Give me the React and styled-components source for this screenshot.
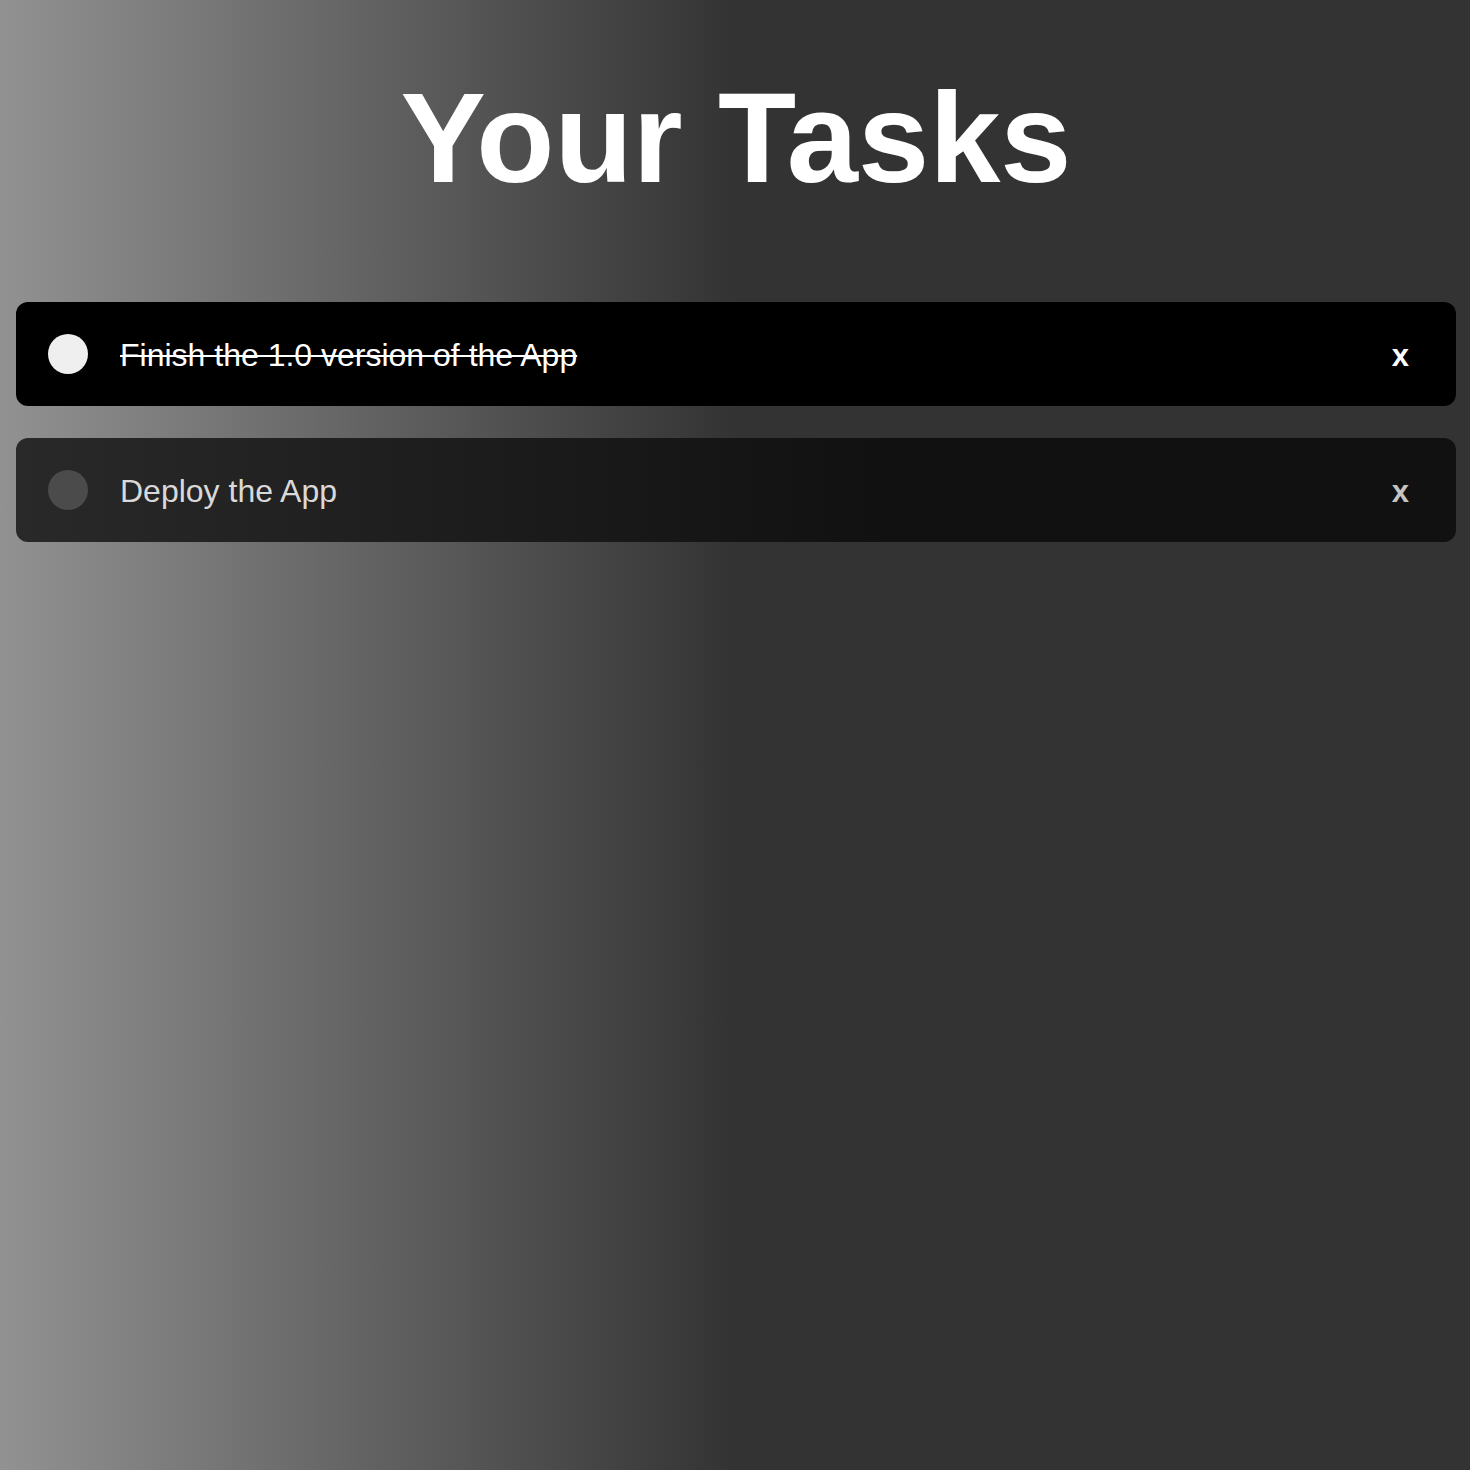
import React, { useState } from 'react'
import styled, { createGlobalStyle } from 'styled-components'

const GlobalStyle = createGlobalStyle`
  html, body {
    margin: 0;
    padding: 0;
  }
  body {
    min-height: 1470px;
    background: linear-gradient(to right, #929292 0%, #333333 50%, #333333 100%);
    font-family: "Liberation Sans", Arial, sans-serif;
    color: #fff;
  }
`

const Page = styled.div`
  padding: 66px 14px 0 16px;
`

const Title = styled.h1`
  margin: 0 0 93px;
  text-align: center;
  font-size: 128px;
  font-weight: 700;
  line-height: 143px;
  color: #fff;
`

const List = styled.ul`
  list-style: none;
  margin: 0;
  padding: 0;
  display: flex;
  flex-direction: column;
  gap: 32px;
`

const Row = styled.li`
  display: flex;
  align-items: center;
  height: 104px;
  padding: 0 47px 0 32px;
  border-radius: 12px;
  background: ${p => (p.$done ? '#000' : 'linear-gradient(to right, #292929, #111 60%, #111)')};
`

const Dot = styled.button`
  width: 40px;
  height: 40px;
  border: none;
  border-radius: 50%;
  padding: 0;
  flex: none;
  cursor: pointer;
  background: ${p => (p.$done ? '#efefef' : '#4b4b4b')};
`

const Label = styled.span`
  flex: 1;
  margin-left: 32px;
  padding-top: 2px;
  font-size: 32px;
  color: ${p => (p.$done ? '#fff' : '#d9d9d9')};
  text-decoration: ${p => (p.$done ? 'line-through' : 'none')};
  text-decoration-thickness: 2px;
`

const Remove = styled.button`
  border: none;
  background: none;
  padding: 2px 0 0;
  font-family: "Liberation Sans", Arial, sans-serif;
  font-size: 31px;
  font-weight: 700;
  line-height: 1;
  cursor: pointer;
  color: ${p => (p.$done ? '#fff' : '#c4c4c4')};
`

export default function App() {
  const [tasks, setTasks] = useState([
    { id: 1, text: 'Finish the 1.0 version of the App', done: true },
    { id: 2, text: 'Deploy the App', done: false },
  ])

  const toggle = id =>
    setTasks(ts => ts.map(t => (t.id === id ? { ...t, done: !t.done } : t)))

  const remove = id => setTasks(ts => ts.filter(t => t.id !== id))

  return (
    <>
      <GlobalStyle />
      <Page>
        <Title>Your Tasks</Title>
        <List>
          {tasks.map(t => (
            <Row key={t.id} $done={t.done}>
              <Dot $done={t.done} onClick={() => toggle(t.id)} />
              <Label $done={t.done}>{t.text}</Label>
              <Remove $done={t.done} onClick={() => remove(t.id)}>
                x
              </Remove>
            </Row>
          ))}
        </List>
      </Page>
    </>
  )
}
